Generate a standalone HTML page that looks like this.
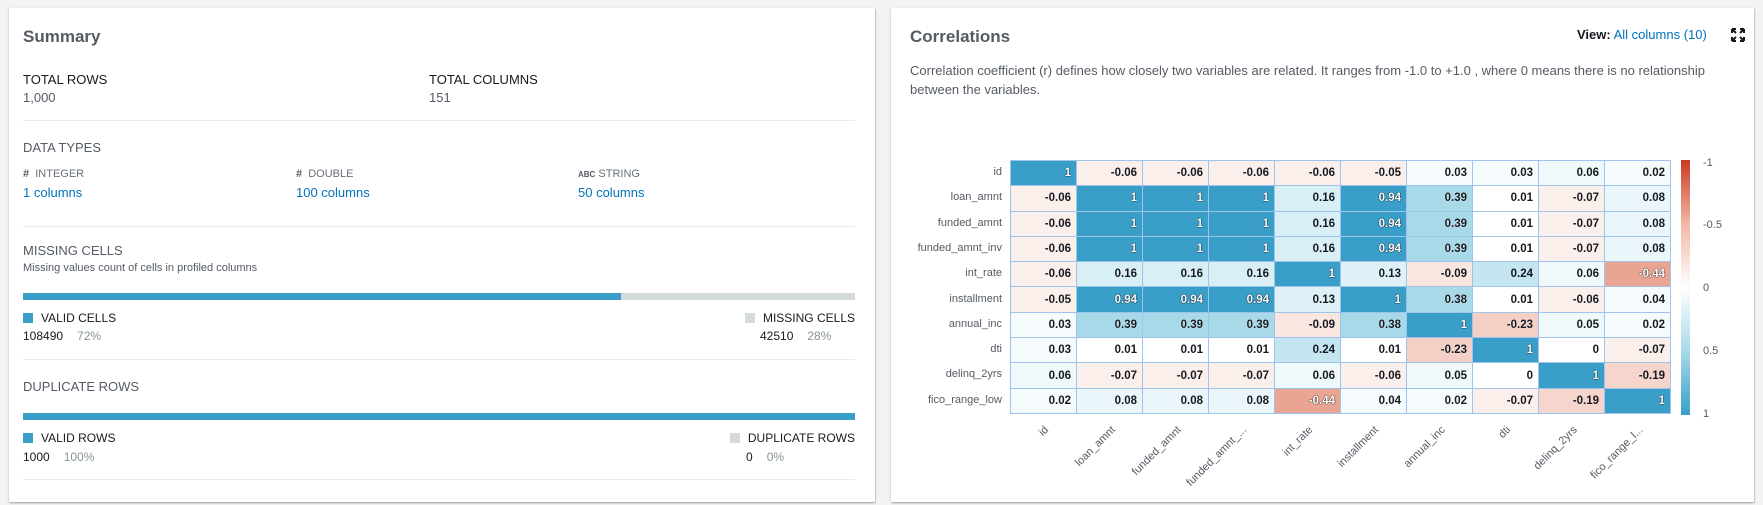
<!DOCTYPE html>
<html><head><meta charset="utf-8">
<style>
*{box-sizing:border-box;margin:0;padding:0}
body{width:1763px;height:505px;overflow:hidden;background:#f2f3f3;font-family:"Liberation Sans",Arial,sans-serif;color:#16191f;position:relative}
.card{position:absolute;top:8px;height:494px;background:#fff;box-shadow:0 1px 2px rgba(0,28,36,.3),1px 1px 1px rgba(0,28,36,.1)}
.a{position:absolute;white-space:nowrap}
.h{font-size:17px;font-weight:bold;color:#545b64}
.lbl{font-size:13px;color:#16191f}
.sec{font-size:13px;color:#545b64}
.small{font-size:11px;color:#687078}
.link{font-size:13px;color:#0073bb}
.hr{position:absolute;left:23px;width:832px;height:1px;background:#e9ebed}
.sq{display:inline-block;width:10px;height:10px;vertical-align:-1px;margin-right:8px}
.g{color:#879596;margin-left:14px}
table{position:absolute;left:1010px;top:160px;border-collapse:collapse;table-layout:fixed}
td{width:66px;height:25.3px;border:1.5px solid #9fc4ec;font-size:11.5px;font-weight:bold;text-align:right;padding-right:5px;color:#16191f}
.d{background:#3a9fc8;color:#fff;text-shadow:0 0 1px #000,0 0 1px #000}
.p39{background:#a8d9e9;text-shadow:0 0 1px #fff}.p24{background:#c5e6f0}.p16{background:#d8eff6}.p13{background:#ddf1f7}
.p08{background:#eaf6fa}.p06{background:#eff8fb}.p03{background:#f5fbfd}.p01{background:#fff}
.n06{background:#fbefec}.n09{background:#f9e6e1}.n19{background:#f5d5cc}.n23{background:#f4cfc5;text-shadow:0 0 1px #fff}.n44{background:#eaa592;color:#fff;text-shadow:0 0 1px #000,0 0 1px #000}
.rl{position:absolute;right:761px;font-size:11px;color:#545b64;text-align:right}
.xl{position:absolute;top:424px;width:0;height:0}
.xl span{position:absolute;right:0;top:0;font-size:11px;color:#545b64;white-space:nowrap;transform:rotate(-45deg);transform-origin:100% 0}
.tk{position:absolute;left:1703px;font-size:11px;color:#545b64}
</style></head><body>
<div class="card" style="left:9px;width:866px"></div>
<div class="card" style="left:891px;width:863px"></div>

<div class="a h" style="left:23px;top:27px">Summary</div>
<div class="a lbl" style="left:23px;top:72px">TOTAL ROWS</div>
<div class="a lbl" style="left:23px;top:90px;color:#545b64">1,000</div>
<div class="a lbl" style="left:429px;top:72px">TOTAL COLUMNS</div>
<div class="a lbl" style="left:429px;top:90px;color:#545b64">151</div>
<div class="hr" style="top:120px"></div>
<div class="a sec" style="left:23px;top:140px">DATA TYPES</div>
<div class="a small" style="left:23px;top:168px"><b style="color:#545b64">#</b>&nbsp; INTEGER</div>
<div class="a link" style="left:23px;top:185px">1 columns</div>
<div class="a small" style="left:296px;top:168px"><b style="color:#545b64">#</b>&nbsp; DOUBLE</div>
<div class="a link" style="left:296px;top:185px">100 columns</div>
<div class="a small" style="left:578px;top:168px"><b style="color:#545b64;font-size:8px">ABC</b> STRING</div>
<div class="a link" style="left:578px;top:185px">50 columns</div>
<div class="hr" style="top:226px"></div>
<div class="a sec" style="left:23px;top:243px">MISSING CELLS</div>
<div class="a small" style="left:23px;top:262px;color:#545b64">Missing values count of cells in profiled columns</div>
<div class="a" style="left:23px;top:293px;width:832px;height:7px;background:#d5dbdb"><div style="width:598px;height:7px;background:#3a9fc8"></div></div>
<div class="a lbl" style="left:23px;top:311px;font-size:12px"><span class="sq" style="background:#3a9fc8"></span>VALID CELLS</div>
<div class="a lbl" style="left:23px;top:329px;font-size:12px">108490<span class="g">72%</span></div>
<div class="a lbl" style="right:908px;top:311px;font-size:12px"><span class="sq" style="background:#d5dbdb"></span>MISSING CELLS</div>
<div class="a lbl" style="left:760px;top:329px;font-size:12px">42510<span class="g">28%</span></div>
<div class="hr" style="top:359px"></div>
<div class="a sec" style="left:23px;top:379px">DUPLICATE ROWS</div>
<div class="a" style="left:23px;top:413px;width:832px;height:7px;background:#3a9fc8"></div>
<div class="a lbl" style="left:23px;top:431px;font-size:12px"><span class="sq" style="background:#3a9fc8"></span>VALID ROWS</div>
<div class="a lbl" style="left:23px;top:450px;font-size:12px">1000<span class="g">100%</span></div>
<div class="a lbl" style="right:908px;top:431px;font-size:12px"><span class="sq" style="background:#d5dbdb"></span>DUPLICATE ROWS</div>
<div class="a lbl" style="left:746px;top:450px;font-size:12px">0<span class="g">0%</span></div>
<div class="hr" style="top:479px"></div>

<div class="a h" style="left:910px;top:27px">Correlations</div>
<div class="a" style="left:1577px;top:27px;font-size:13px"><b style="color:#16191f">View:</b> <span style="color:#0073bb">All columns (10)</span></div>
<svg class="a" style="left:1731px;top:28px" width="14" height="14" viewBox="0 0 14 14"><path d="M1 1h4M1 1v4M1 1l4 4M13 1h-4M13 1v4M13 1l-4 4M1 13h4M1 13v-4M1 13l4-4M13 13h-4M13 13v-4M13 13l-4-4" stroke="#16191f" stroke-width="2" fill="none"/></svg>
<div class="a" style="left:910px;top:61px;font-size:13px;color:#545b64;line-height:19px;white-space:normal;width:800px">Correlation coefficient (r) defines how closely two variables are related. It ranges from -1.0 to +1.0 , where 0 means there is no relationship between the variables.</div>

<div class="rl" style="top:166px">id</div>
<div class="rl" style="top:191px">loan_amnt</div>
<div class="rl" style="top:217px">funded_amnt</div>
<div class="rl" style="top:242px">funded_amnt_inv</div>
<div class="rl" style="top:267px">int_rate</div>
<div class="rl" style="top:293px">installment</div>
<div class="rl" style="top:318px">annual_inc</div>
<div class="rl" style="top:343px">dti</div>
<div class="rl" style="top:368px">delinq_2yrs</div>
<div class="rl" style="top:394px">fico_range_low</div>

<table>
<tr><td class="d">1</td><td class="n06">-0.06</td><td class="n06">-0.06</td><td class="n06">-0.06</td><td class="n06">-0.06</td><td class="n06">-0.05</td><td class="p03">0.03</td><td class="p03">0.03</td><td class="p06">0.06</td><td class="p03">0.02</td></tr>
<tr><td class="n06">-0.06</td><td class="d">1</td><td class="d">1</td><td class="d">1</td><td class="p16">0.16</td><td class="d">0.94</td><td class="p39">0.39</td><td class="p01">0.01</td><td class="n06">-0.07</td><td class="p08">0.08</td></tr>
<tr><td class="n06">-0.06</td><td class="d">1</td><td class="d">1</td><td class="d">1</td><td class="p16">0.16</td><td class="d">0.94</td><td class="p39">0.39</td><td class="p01">0.01</td><td class="n06">-0.07</td><td class="p08">0.08</td></tr>
<tr><td class="n06">-0.06</td><td class="d">1</td><td class="d">1</td><td class="d">1</td><td class="p16">0.16</td><td class="d">0.94</td><td class="p39">0.39</td><td class="p01">0.01</td><td class="n06">-0.07</td><td class="p08">0.08</td></tr>
<tr><td class="n06">-0.06</td><td class="p16">0.16</td><td class="p16">0.16</td><td class="p16">0.16</td><td class="d">1</td><td class="p13">0.13</td><td class="n09">-0.09</td><td class="p24">0.24</td><td class="p06">0.06</td><td class="n44">-0.44</td></tr>
<tr><td class="n06">-0.05</td><td class="d">0.94</td><td class="d">0.94</td><td class="d">0.94</td><td class="p13">0.13</td><td class="d">1</td><td class="p39">0.38</td><td class="p01">0.01</td><td class="n06">-0.06</td><td class="p03">0.04</td></tr>
<tr><td class="p03">0.03</td><td class="p39">0.39</td><td class="p39">0.39</td><td class="p39">0.39</td><td class="n09">-0.09</td><td class="p39">0.38</td><td class="d">1</td><td class="n23">-0.23</td><td class="p06">0.05</td><td class="p03">0.02</td></tr>
<tr><td class="p03">0.03</td><td class="p01">0.01</td><td class="p01">0.01</td><td class="p01">0.01</td><td class="p24">0.24</td><td class="p01">0.01</td><td class="n23">-0.23</td><td class="d">1</td><td class="p01">0</td><td class="n06">-0.07</td></tr>
<tr><td class="p06">0.06</td><td class="n06">-0.07</td><td class="n06">-0.07</td><td class="n06">-0.07</td><td class="p06">0.06</td><td class="n06">-0.06</td><td class="p06">0.05</td><td class="p01">0</td><td class="d">1</td><td class="n19">-0.19</td></tr>
<tr><td class="p03">0.02</td><td class="p08">0.08</td><td class="p08">0.08</td><td class="p08">0.08</td><td class="n44">-0.44</td><td class="p03">0.04</td><td class="p03">0.02</td><td class="n06">-0.07</td><td class="n19">-0.19</td><td class="d">1</td></tr>
</table>

<div class="xl" style="left:1043px"><span>id</span></div>
<div class="xl" style="left:1109px"><span>loan_amnt</span></div>
<div class="xl" style="left:1175px"><span>funded_amnt</span></div>
<div class="xl" style="left:1241px"><span>funded_amnt_...</span></div>
<div class="xl" style="left:1307px"><span>int_rate</span></div>
<div class="xl" style="left:1373px"><span>installment</span></div>
<div class="xl" style="left:1439px"><span>annual_inc</span></div>
<div class="xl" style="left:1505px"><span>dti</span></div>
<div class="xl" style="left:1571px"><span>delinq_2yrs</span></div>
<div class="xl" style="left:1637px"><span>fico_range_l...</span></div>

<div class="a" style="left:1681px;top:160px;width:9px;height:255px;background:linear-gradient(#cb3a22,#f0b8a4 25%,#fff 50%,#a8d9e9 75%,#3a9fc8)"></div>
<div class="tk" style="top:157px">-1</div>
<div class="tk" style="top:219px">-0.5</div>
<div class="tk" style="top:282px">0</div>
<div class="tk" style="top:345px">0.5</div>
<div class="tk" style="top:408px">1</div>
</body></html>
